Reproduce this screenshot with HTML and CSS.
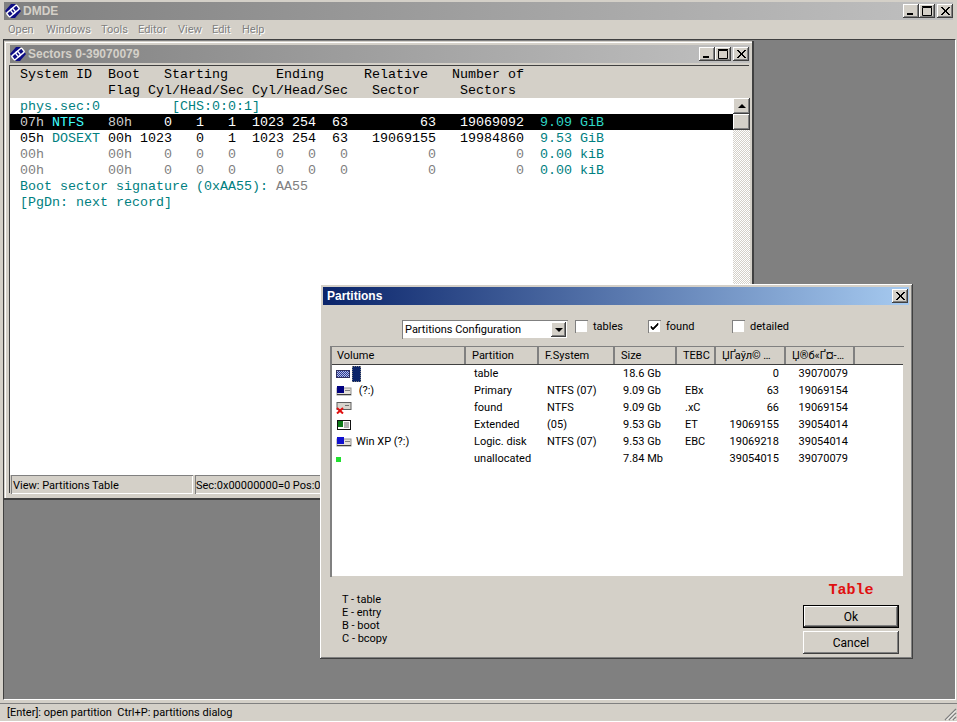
FILE: index.html
```html
<!DOCTYPE html>
<html lang="en">
<head>
  <meta charset="UTF-8" />
  <title>DMDE</title>
  <link rel="stylesheet" href="styles.css">
</head>

<body>
  <svg class="defs" width="0" height="0">
    <symbol id="logo" viewBox="0 0 16 16">
      <polygon points="0,8 6,1 10,1 16,8 10,15 6,15" fill="#0c0c84" />
      <g transform="rotate(-40 8 8)" fill="none" stroke="#fff" stroke-width="1.4">
        <rect x="1.5" y="5.5" width="8" height="5" rx="1" />
        <rect x="6.5" y="5.5" width="8" height="5" rx="1" />
      </g>
    </symbol>
    <symbol id="min" viewBox="0 0 16 14"><rect x="4" y="9" width="6" height="2" fill="#000" /></symbol>
    <symbol id="max" viewBox="0 0 16 14"><path d="M3.5 3.5h9v8h-9z M3 2.5h10" fill="none" stroke="#000" /></symbol>
    <symbol id="close" viewBox="0 0 16 14"><path d="M4 3l8 8M5 3l8 8M12 3l-8 8M13 3l-8 8" stroke="#000" fill="none" /></symbol>
    <symbol id="drive" viewBox="0 0 16 10">
      <rect x="1" y="2" width="14" height="7" fill="#e4e0d8" stroke="#909090" />
      <rect x="9" y="4" width="5" height="1" fill="#808080" />
      <rect x="1" y="8" width="14" height="1" fill="#404040" />
      <rect x="1" y="0" width="7" height="7" fill="currentColor" />
    </symbol>
  </svg>

  <div class="app">
    <div class="titlebar main-title">
      <svg class="logo"><use href="#logo" /></svg>
      <span class="title-text">DMDE</span>
      <span class="win-btns">
        <span class="win-btn"><svg><use href="#min" /></svg></span>
        <span class="win-btn"><svg><use href="#max" /></svg></span>
        <span class="win-btn close-btn"><svg><use href="#close" /></svg></span>
      </span>
    </div>

    <div class="menu">
      <span class="m-open">Open</span>
      <span class="m-windows">Windows</span>
      <span class="m-tools">Tools</span>
      <span class="m-editor">Editor</span>
      <span class="m-view">View</span>
      <span class="m-edit">Edit</span>
      <span>Help</span>
    </div>

    <div class="mdi">
      <div class="sectors">
        <div class="titlebar">
          <svg class="logo"><use href="#logo" /></svg>
          <span class="title-text">Sectors 0-39070079</span>
          <span class="win-btns">
            <span class="win-btn"><svg><use href="#min" /></svg></span>
            <span class="win-btn"><svg><use href="#max" /></svg></span>
            <span class="win-btn close-btn"><svg><use href="#close" /></svg></span>
          </span>
        </div>
        <div class="client">
          <div class="term-head">
            <div class="line"> System ID  Boot   Starting      Ending     Relative   Number of</div>
            <div class="line">            Flag Cyl/Head/Sec Cyl/Head/Sec   Sector     Sectors</div>
          </div>
          <div class="body">
            <div class="term">
              <div class="line"> <i>phys.sec:0</i>         <i>[CHS:0:0:1]</i></div>
              <div class="line sel"> <b>07h</b> <u>NTFS</u>   <b>80h</b>    0   1   1  1023 254  63         63   19069092  <em>9.09 GiB</em></div>
              <div class="line"> 05h <i>DOSEXT</i> 00h 1023   0   1  1023 254  63   19069155   19984860  <i>9.53 GiB</i></div>
              <div class="line dim"> 00h        00h    0   0   0     0   0   0          0          0  <i>0.00 kiB</i></div>
              <div class="line dim"> 00h        00h    0   0   0     0   0   0          0          0  <i>0.00 kiB</i></div>
              <div class="line"> <i>Boot sector signature (0xAA55):</i> <s>AA55</s></div>
              <div class="line"> <i>[PgDn: next record]</i></div>
            </div>
            <div class="scrollbar">
              <span class="sb-btn"><span class="arrow-up"></span></span>
              <span class="sb-btn"></span>
              <span class="sb-track"></span>
            </div>
          </div>
          <div class="panels">
            <span class="panel panel-view">View: Partitions Table</span>
            <span class="panel panel-pos">Sec:0x00000000=0 Pos:0</span>
          </div>
        </div>
      </div>

      <div class="dialog">
        <div class="titlebar dlg-title">
          <span class="title-text">Partitions</span>
          <span class="win-btns">
            <span class="win-btn close-btn"><svg><use href="#close" /></svg></span>
          </span>
        </div>

        <div class="toolbar">
          <div class="combo">
            <span>Partitions Configuration</span>
            <span class="combo-btn"><span class="arrow-down"></span></span>
          </div>
          <label class="check check-tables"><span class="box"></span>tables</label>
          <label class="check check-found">
            <span class="box"><svg viewBox="0 0 11 11"><path d="M2 5l2 2 5-5v2l-5 5-2-2z" fill="#000" stroke="#000" stroke-width=".6" /></svg></span>found
          </label>
          <label class="check"><span class="box"></span>detailed</label>
        </div>

        <div class="list">
          <div class="list-head">
            <span class="h-first">Volume</span>
            <span>Partition</span>
            <span>F.System</span>
            <span>Size</span>
            <span>TEBC</span>
            <span>ЏҐаўл© …</span>
            <span>Џ®б«Ґ¤-…</span>
            <span class="h-rest"></span>
          </div>

          <div class="row">
            <span class="vol">
              <span class="ico ico-table"></span><span class="vol-sel"></span>
            </span>
            <span>table</span><span></span><span>18.6 Gb</span><span></span>
            <span class="num">0</span><span class="num">39070079</span>
          </div>
          <div class="row">
            <span class="vol">
              <svg class="ico ico-navy"><use href="#drive" /></svg><span class="vol-name">&nbsp;(?:)</span>
            </span>
            <span>Primary</span><span>NTFS (07)</span><span>9.09 Gb</span><span>EBx</span>
            <span class="num">63</span><span class="num">19069154</span>
          </div>
          <div class="row">
            <span class="vol">
              <svg class="ico ico-found" viewBox="0 0 16 12">
                <rect x="1" y="0.5" width="14" height="7" fill="#d8d4cc" stroke="#606060" />
                <rect x="9" y="3" width="4" height="1" fill="#707070" />
                <path d="M1 6l6 5.5M7 6l-6 5.5" stroke="#e01010" stroke-width="2" />
              </svg>
            </span>
            <span>found</span><span>NTFS</span><span>9.09 Gb</span><span>.xC</span>
            <span class="num">66</span><span class="num">19069154</span>
          </div>
          <div class="row">
            <span class="vol">
              <svg class="ico ico-ext" viewBox="0 0 16 10">
                <rect x="1.5" y=".5" width="13" height="9" fill="#fff" stroke="#111" />
                <rect x="2" y="1" width="5" height="6" fill="#0c7a18" />
                <path d="M8 3h5M8 5h5M8 7h5" stroke="#666" />
              </svg>
            </span>
            <span>Extended</span><span>(05)</span><span>9.53 Gb</span><span>ET</span>
            <span class="num">19069155</span><span class="num">39054014</span>
          </div>
          <div class="row">
            <span class="vol">
              <svg class="ico ico-blue"><use href="#drive" /></svg><span class="vol-name">Win XP (?:)</span>
            </span>
            <span>Logic. disk</span><span>NTFS (07)</span><span>9.53 Gb</span><span>EBC</span>
            <span class="num">19069218</span><span class="num">39054014</span>
          </div>
          <div class="row">
            <span class="vol"><span class="ico ico-free"></span></span>
            <span>unallocated</span><span></span><span>7.84 Mb</span><span></span>
            <span class="num">39054015</span><span class="num">39070079</span>
          </div>
        </div>

        <div class="dlg-foot">
          <div class="legend">
            <div>T - table</div>
            <div>E - entry</div>
            <div>B - boot</div>
            <div>C - bcopy</div>
          </div>
          <div class="actions">
            <div class="mode">Table</div>
            <button class="btn btn-default">Ok</button>
            <button class="btn">Cancel</button>
          </div>
        </div>
      </div>
    </div>

    <div class="statusbar">
      <span>[Enter]: open partition&nbsp; Ctrl+P: partitions dialog</span>
      <svg class="grip" width="14" height="14" viewBox="0 0 14 14">
        <path d="M13 2L2 13M13 6L6 13M13 10L10 13" stroke="#808080" stroke-width="1.4" />
        <path d="M13 3.5L3.5 13M13 7.5L7.5 13M13 11.5L11.5 13" stroke="#fff" />
      </svg>
    </div>
  </div>
</body>
</html>
```
FILE: styles.css
```css
* {
  box-sizing: border-box;
  margin: 0;
  padding: 0;
}

html, body {
  width: 957px;
  height: 722px;
  overflow: hidden;
  background: #d4d0c8;
  font-family: Roboto, 'Liberation Sans', Arial, sans-serif;
  font-size: 11px;
  color: #000;
}

.defs {
  position: absolute;
}

.app {
  height: 722px;
  display: flex;
  flex-direction: column;
  padding-top: 2px;
}

/* title bars */
.titlebar {
  height: 18px;
  flex: none;
  display: flex;
  align-items: center;
  background: linear-gradient(90deg, #808080, #c0c0c0);
}

.main-title {
  margin: 0 4px;
  padding-left: 1px;
}

.main-title .win-btns {
  padding-right: 0;
}

.logo {
  width: 16px;
  height: 16px;
  flex: none;
}

.title-text {
  font-family: 'Liberation Sans', Arial, sans-serif;
  font-weight: bold;
  font-size: 12px;
  color: #d4d0c8;
  margin-left: 2px;
}

.win-btns {
  margin-left: auto;
  display: flex;
  padding-right: 1px;
}

.win-btn {
  width: 16px;
  height: 14px;
  background: #d4d0c8;
  box-shadow: inset -1px -1px #404040, inset 1px 1px #fff, inset -2px -2px #808080;
}

.win-btn svg {
  display: block;
  width: 16px;
  height: 14px;
}

.close-btn {
  margin-left: 2px;
}

.menu {
  height: 19px;
  flex: none;
  display: flex;
  align-items: center;
  padding-left: 8px;
  color: #808080;
  text-shadow: 1px 1px #fff;
}

.menu span { display: block; }
.m-open { width: 38px; }
.m-windows { width: 55px; }
.m-tools { width: 37px; }
.m-editor { width: 40px; }
.m-view { width: 34px; }
.m-edit { width: 30px; }

/* mdi area, windows float on it */
.mdi {
  flex: 1;
  position: relative;
  margin: 0 1px 0 3px;
  background: #808080;
  border: 1px solid;
  border-color: #404040 #fff #fff #404040;
  overflow: hidden;
}

.sectors {
  position: absolute;
  left: 0;
  top: 1px;
  width: 750px;
  height: 459px;
  padding: 4px 4px 6px 6px;
  display: flex;
  flex-direction: column;
  background: #d4d0c8;
  box-shadow: inset -2px -2px #404040, inset 1px 1px #d4d0c8, inset 2px 2px #fff;
}

.client {
  flex: 1;
  margin-top: 3px;
  display: flex;
  flex-direction: column;
  min-height: 0;
  position: relative;
  box-shadow: -1px -1px #404040;
}

.term-head, .term {
  font-family: 'Liberation Mono', 'Courier New', monospace;
  font-size: 13.33px;
  line-height: 16px;
}

.term-head {
  height: 32px;
  flex: none;
}

.body {
  flex: 1;
  min-height: 0;
  display: flex;
  background: #fff;
}

.term {
  flex: 1;
  overflow: hidden;
}

.line {
  height: 16px;
  padding: 1px 0 0 2px;
  white-space: pre;
}

.term i { font-style: normal; color: #008080; }
.term s { text-decoration: none; color: #808080; }

.sel {
  background: #000;
  color: #fff;
}

.sel b { font-weight: normal; color: #d0d0d0; }
.sel u { text-decoration: none; color: #40ffff; }
.sel em { font-style: normal; color: #30d8c8; }

.dim { color: #808080; }

.scrollbar {
  width: 17px;
  flex: none;
  display: flex;
  flex-direction: column;
}

.sb-btn {
  height: 16px;
  flex: none;
  display: flex;
  align-items: center;
  justify-content: center;
  background: #d4d0c8;
  box-shadow: inset -1px -1px #404040, inset 1px 1px #fff, inset -2px -2px #808080;
}

.sb-track {
  flex: 1;
  background: repeating-conic-gradient(#fff 0 25%, #d4d0c8 0 50%) 0 0 / 2px 2px;
}

.arrow-up {
  border: 4px solid transparent;
  border-top: 0;
  border-bottom-color: #000;
}

.arrow-down {
  border: 4px solid transparent;
  border-bottom: 0;
  border-top-color: #000;
}

.panels {
  height: 19px;
  flex: none;
  display: flex;
  gap: 2px;
  padding-left: 1px;
}

.panel {
  height: 19px;
  line-height: 21px;
  padding-left: 2px;
  white-space: nowrap;
  overflow: hidden;
  box-shadow: inset 1px 1px #808080, inset -1px -1px #fff;
}

.panel-view { width: 182px; }
.panel-pos { flex: 1; padding-left: 1px; }

/* partitions dialog */
.dialog {
  position: absolute;
  left: 316px;
  top: 244px;
  width: 593px;
  height: 375px;
  padding: 3px 4px 0 3px;
  display: flex;
  flex-direction: column;
  background: #d4d0c8;
  box-shadow: inset -1px -1px #404040, inset 1px 1px #fff, inset -2px -2px #808080;
}

.dlg-title {
  background: linear-gradient(90deg, #0a246a, #a6caf0);
}

.dlg-title .title-text {
  color: #fff;
  margin-left: 4px;
}

.toolbar {
  height: 19px;
  margin: 15px 0 7px 79px;
  display: flex;
  flex: none;
}

.combo {
  width: 166px;
  height: 19px;
  display: flex;
  align-items: center;
  justify-content: space-between;
  padding: 0 2px 0 3px;
  background: #fff;
  box-shadow: inset 1px 1px #808080, inset -1px -1px #d4d0c8;
}

.combo-btn {
  width: 15px;
  height: 15px;
  display: flex;
  align-items: center;
  justify-content: center;
  background: #d4d0c8;
  box-shadow: inset -1px -1px #404040, inset 1px 1px #fff, inset -2px -2px #808080;
}

.check {
  display: flex;
  gap: 5px;
  line-height: 13px;
  margin-left: 7px;
}

.check-tables { width: 66px; }
.check-found { width: 77px; }

.box {
  width: 13px;
  height: 13px;
  flex: none;
  background: #fff;
  box-shadow: inset 1px 1px #808080, inset -1px -1px #d4d0c8;
}

.box svg {
  display: block;
  width: 13px;
  height: 13px;
  padding: 1px;
}

.list {
  width: 574px;
  height: 231px;
  margin-left: 7px;
  flex: none;
  padding: 1px 1px 1px 2px;
  background: #fff;
  box-shadow: inset 2px 1px #808080, inset -1px -1px #d4d0c8;
}

.list-head, .row {
  display: grid;
  grid-template-columns: 134px 73px 76px 62px 39px 70px 69px 1fr;
}

.list-head {
  height: 17px;
  line-height: 17px;
  background: #d4d0c8;
  box-shadow: 0 1px #404040;
}

.list-head span {
  padding-left: 6px;
  white-space: nowrap;
  overflow: hidden;
  box-shadow: inset -2px 0 #808080;
}

.list-head .h-first { padding-left: 5px; }
.list-head .h-rest { box-shadow: none; }

.row {
  height: 17px;
  line-height: 17px;
}

.row:nth-child(2) {
  margin-top: 1px;
}

.row span {
  padding-left: 8px;
  white-space: nowrap;
}

.row .num {
  padding: 0 7px 0 0;
  text-align: right;
}

.row .vol {
  padding-left: 4px;
  display: flex;
  align-items: center;
}

.row .ico {
  padding: 0;
  flex: none;
  display: block;
  width: 16px;
}

.row .ico-table {
  height: 8px;
  width: 14px;
  margin: 1px 2px 0 0;
  background: repeating-conic-gradient(#28389c 0 25%, #b8c0e0 0 50%) 0 0 / 2px 2px;
  border: 1px solid #303060;
}

.row .vol-sel {
  width: 9px;
  height: 16px;
  padding: 0;
  background: #0a246a;
  outline: 1px dotted #808080;
  outline-offset: -1px;
}

.row .vol-name { padding-left: 4px; }

.ico-navy { height: 10px; color: #000080; }
.ico-blue { height: 10px; color: #1010d0; }
.ico-found { height: 12px; }
.ico-ext { height: 10px; }

.row .ico-free {
  width: 5px;
  height: 5px;
  margin-top: 1px;
  background: #20e030;
}

.dlg-foot {
  flex: 1;
  display: flex;
  justify-content: space-between;
  padding-right: 10px;
}

.legend {
  margin: 16px 0 0 19px;
  line-height: 13px;
}

.actions {
  width: 96px;
  display: flex;
  flex-direction: column;
  gap: 3px;
}

.mode {
  height: 25px;
  line-height: 28px;
  font-family: 'Liberation Mono', 'Courier New', monospace;
  font-weight: bold;
  font-size: 15px;
  color: #e01010;
  text-align: center;
}

.btn {
  height: 23px;
  border: none;
  background: #d4d0c8;
  font-family: inherit;
  font-size: 12px;
  color: #000;
  box-shadow: inset -1px -1px #404040, inset 1px 1px #fff, inset -2px -2px #808080;
}

.btn-default {
  box-shadow: inset 0 0 0 1px #000, inset -2px -2px #404040, inset 2px 2px #fff, inset -3px -3px #808080;
}

/* bottom status line */
.statusbar {
  height: 19px;
  flex: none;
  margin-top: 3px;
  display: flex;
  align-items: center;
  justify-content: space-between;
  padding-left: 7px;
  box-shadow: inset 0 1px #808080, inset 0 -1px #fff;
}

.grip {
  margin: 2px 0 0 0;
}
```
